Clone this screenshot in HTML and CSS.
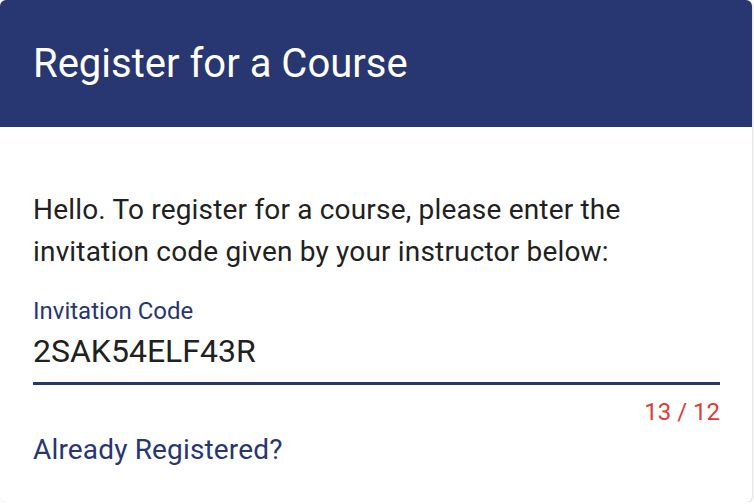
FILE: index.html
```html
<!DOCTYPE html>
<html>
<head>
<meta charset="utf-8">
<link rel="stylesheet" href="styles.css">
</head>
<body>
<div class="card">
  <div class="card-header">
    <h1 class="title">Register for a Course</h1>
  </div>
  <div class="card-body">
    <p class="intro">Hello. To register for a course, please enter the invitation code given by your instructor below:</p>
    <div class="field">
      <label class="field-label">Invitation Code</label>
      <div class="field-value">2SAK54ELF43R</div>
      <div class="field-line"></div>
      <div class="field-counter">13 / 12</div>
    </div>
    <a class="link" href="#">Already Registered?</a>
  </div>
</div>
</body>
</html>
```

FILE: styles.css
```css
html, body {
  margin: 0;
  padding: 0;
  background: #ffffff;
  font-family: Roboto, "Liberation Sans", sans-serif;
}
.card {
  width: 752px;
  height: 502px;
  background: #ffffff;
  border-radius: 6px;
  box-shadow: 1px 1px 2px rgba(0,0,0,0.12);
  overflow: hidden;
}
.card-header {
  background: #283671;
  height: 127px;
  display: flex;
  align-items: center;
  padding: 0 33px;
}
.title {
  margin: 0;
  color: #ffffff;
  font-weight: 400;
  font-size: 40px;
  line-height: 47px;
}
.card-body {
  padding: 0 33px;
}
.intro {
  margin: 62px 0 0;
  font-size: 28px;
  line-height: 42px;
  letter-spacing: 0.18px;
  color: #212121;
}
.field {
  margin-top: 24px;
  width: 687px;
}
.field-label {
  display: block;
  font-size: 24px;
  line-height: 28px;
  color: #283671;
}
.field-value {
  font-size: 32px;
  line-height: 37px;
  color: #212121;
  margin-top: 8px;
}
.field-line {
  height: 3px;
  background: #283671;
  margin-top: 12px;
}
.field-counter {
  text-align: right;
  font-size: 24px;
  line-height: 28px;
  color: #e53935;
  margin-top: 13px;
}
.link {
  display: block;
  margin-top: 7px;
  font-size: 28px;
  line-height: 33px;
  letter-spacing: 0.16px;
  color: #283671;
  text-decoration: none;
}
```
